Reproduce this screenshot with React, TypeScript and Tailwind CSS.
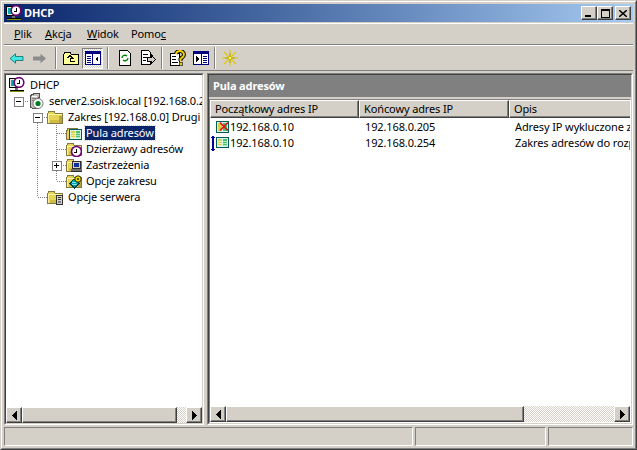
import React from "react";

const Icon = ({ children, className = "" }: { children: React.ReactNode; className?: string }) => (
  <svg width="16" height="16" viewBox="0 0 16 16" shapeRendering="crispEdges" className={"shrink-0 " + className}>
    {children}
  </svg>
);

const DhcpIcon = () => (
  <Icon>
    <rect x="0.5" y="1.5" width="9" height="9" fill="#e8e8e8" stroke="#000" />
    <rect x="2" y="3" width="6" height="6" fill="#00b0a8" />
    <rect x="1" y="13" width="14" height="1" fill="#000" />
    <rect x="1" y="14" width="14" height="1" fill="#809000" />
    <rect x="6" y="11" width="3" height="2" fill="#707070" />
    <circle cx="10" cy="5.5" r="4.8" fill="#fff" stroke="#700070" strokeWidth="1.6" shapeRendering="auto" />
    <path d="M10 2.5V6H7.5" stroke="#000" fill="none" />
  </Icon>
);

const ServerIcon = () => (
  <Icon>
    <path d="M2.5 2.5L6.5 .5H11.5V4L10 5V15.5H5L2.5 14Z" fill="#c4c0b8" stroke="#505050" />
    <rect x="4" y="3" width="5" height="1" fill="#fff" />
    <rect x="4" y="5" width="4" height="1" fill="#808080" />
    <rect x="4" y="7" width="3" height="1" fill="#808080" />
    <circle cx="10" cy="10.5" r="5" fill="#fff" stroke="#707070" shapeRendering="auto" />
    <circle cx="10" cy="10.5" r="2.6" fill="#007c20" shapeRendering="auto" />
  </Icon>
);

const Folder = () => (
  <>
    <path d="M.5 4.5L2 2.5H7L8.5 4.5H15.5V14.5H.5Z" fill="#e6d458" stroke="#807840" />
    <rect x="1" y="5" width="14" height="1" fill="#fff4a8" />
    <rect x="1" y="6" width="1" height="8" fill="#fff098" />
    <rect x="12" y="7" width="3" height="7" fill="#b8a438" />
    <rect x="3" y="11" width="9" height="3" fill="#cebc44" />
  </>
);

const FolderIcon = () => (
  <Icon>
    <Folder />
  </Icon>
);

const ServerOptIcon = () => (
  <Icon>
    <Folder />
    <rect x="9.5" y="6.5" width="6" height="9" fill="#d4d0c8" stroke="#303030" />
    <rect x="11" y="8" width="3" height="1" fill="#303030" />
    <rect x="11" y="10" width="3" height="1" fill="#303030" />
    <rect x="11" y="12" width="3" height="2" fill="#808080" />
  </Icon>
);

const PoolIcon = () => (
  <Icon>
    <path d="M0.5 6.5L2 3.5H11L14.5 5.5V14.5H0.5Z" fill="#e6d458" stroke="#807840" />
    <rect x="3.5" y="4.5" width="12" height="10" fill="#d8f4ec" stroke="#005c5c" />
    <rect x="5" y="6" width="4" height="7" fill="#dcd040" />
    <path d="M5 8H9M5 10H9M5 12H9" stroke="#f4f0a0" />
    <rect x="10" y="6" width="4" height="7" fill="#50c070" />
    <path d="M10 8H14M10 10H14M10 12H14" stroke="#a8e8b8" />
  </Icon>
);

const LeaseIcon = () => (
  <Icon>
    <Folder />
    <circle cx="10.5" cy="10.5" r="5" fill="#fff" stroke="#700070" strokeWidth="1.7" shapeRendering="auto" />
    <path d="M10.5 7.5V11H8" stroke="#000" fill="none" />
  </Icon>
);

const ReserveIcon = () => (
  <Icon>
    <Folder />
    <rect x="6.5" y="4.5" width="8" height="7" fill="#d4d0c8" stroke="#303030" />
    <rect x="8" y="6" width="5" height="4" fill="#1030a0" />
    <rect x="5" y="12" width="11" height="2" fill="#707070" />
    <rect x="5" y="14" width="11" height="1" fill="#303030" />
  </Icon>
);

const ScopeOptIcon = () => (
  <Icon>
    <Folder />
    <path d="M8 6L13 10.5L8.5 15L4 10.5Z" fill="#00a8b0" stroke="#004048" />
    <path d="M6 9H10M6 11H11" stroke="#80e0e8" />
    <circle cx="12" cy="6" r="3.2" fill="#f0d800" stroke="#303000" shapeRendering="auto" />
    <circle cx="12" cy="6" r="1" fill="#303000" shapeRendering="auto" />
  </Icon>
);

const ExcludedIcon = () => (
  <svg width="13" height="12" viewBox="0 0 13 12" shapeRendering="crispEdges" className="shrink-0">
    <rect x="0.5" y="0.5" width="12" height="11" fill="#d8f4ec" stroke="#005c5c" />
    <rect x="2" y="2" width="4" height="8" fill="#dcd040" />
    <rect x="7" y="2" width="4" height="8" fill="#50c070" />
    <path d="M4 1.5L12 9.5M12 1.5L4 9.5" stroke="#e01010" strokeWidth="1.7" shapeRendering="auto" />
  </svg>
);

const RangeIcon = () => (
  <svg width="18" height="16" viewBox="0 0 18 16" shapeRendering="crispEdges" className="shrink-0">
    <rect x="1" y="1" width="2" height="15" fill="#0000a0" />
    <rect x="0" y="2" width="4" height="1" fill="#0000a0" />
    <rect x="0" y="14" width="4" height="1" fill="#0000a0" />
    <rect x="5.5" y="2.5" width="12" height="10" fill="#d8f4ec" stroke="#005c5c" />
    <rect x="7" y="4" width="4" height="7" fill="#d0d860" />
    <path d="M7 6H11M7 8H11M7 10H11" stroke="#f0f0a8" />
    <rect x="12" y="4" width="4" height="7" fill="#50c070" />
    <path d="M12 6H16M12 8H16M12 10H16" stroke="#a8e8b8" />
  </svg>
);

const BackIcon = () => (
  <svg width="15" height="11" viewBox="0 0 15 11">
    <path d="M1 5.5L6.5 .8V3.5H14V7.5H6.5V10.2Z" fill="#40e8e0" stroke="#005858" strokeWidth=".7" />
  </svg>
);

const ForwardIcon = () => (
  <svg width="15" height="11" viewBox="0 0 15 11">
    <path d="M14 5.5L8.5 .8V3.5H1V7.5H8.5V10.2Z" fill="#8c8c8c" />
  </svg>
);

const ToolSep = () => <div className="w-[2px] h-[22px] border-l border-[#808080] bg-white shrink-0" />;

const Expander = ({ x, y, plus }: { x: number; y: number; plus: boolean }) => (
  <g>
    <rect x={x - 4.5} y={y - 4.5} width="9" height="9" fill="#fff" stroke="#808080" />
    <rect x={x - 2.5} y={y - 0.5} width="5" height="1" fill="#000" />
    {plus && <rect x={x - 0.5} y={y - 2.5} width="1" height="5" fill="#000" />}
  </g>
);

type Cell = "" | "v" | "T" | "L" | "minus" | "minusB" | "plusV";

const Gutter = ({ cells }: { cells: Cell[] }) => (
  <svg width={cells.length * 19} height="16" shapeRendering="crispEdges" className="shrink-0">
    {cells.map((c, i) => {
      const x = 9.5 + i * 19;
      const dash = "1 1";
      const right = i * 19 + 19;
      return (
        <g key={i}>
          {(c === "v" || c === "T" || c === "plusV") && (
            <line x1={x} x2={x} y1="0" y2="16" stroke="#808080" strokeDasharray={dash} />
          )}
          {c === "L" && <line x1={x} x2={x} y1="0" y2="8" stroke="#808080" strokeDasharray={dash} />}
          {c === "minusB" && <line x1={x} x2={x} y1="8" y2="16" stroke="#808080" strokeDasharray={dash} />}
          {(c === "T" || c === "L" || c === "minus" || c === "minusB" || c === "plusV") && (
            <line x1={x} x2={right} y1="8.5" y2="8.5" stroke="#808080" strokeDasharray={dash} />
          )}
          {(c === "minus" || c === "minusB") && <Expander x={x} y={8.5} plus={false} />}
          {c === "plusV" && <Expander x={x} y={8.5} plus />}
        </g>
      );
    })}
  </svg>
);

const TreeRow = ({
  cells,
  icon,
  label,
  selected,
  shift,
}: {
  cells: Cell[];
  icon: React.ReactNode;
  label: string;
  selected?: boolean;
  shift?: boolean;
}) => (
  <div className="flex items-center h-4 whitespace-nowrap">
    <Gutter cells={cells} />
    {icon}
    <span
      className={
        selected
          ? "ml-[3px] px-[1px] h-[14px] leading-[13px] bg-[#0a246a] text-white outline-1 outline-dotted outline-[#d4d0c8]"
          : shift
            ? "ml-[4px] leading-[14px]"
            : "ml-[5px] leading-[14px]"
      }
    >
      {label}
    </span>
  </div>
);

const Arrow = ({ dir }: { dir: "l" | "r" }) => (
  <svg width="5" height="9" viewBox="0 0 5 9" shapeRendering="crispEdges">
    {dir === "l" ? <path d="M4 0H5V9H4V8H3V7H2V6H1V5H0V4H1V3H2V2H3V1H4Z" fill="#000" /> : <path d="M0 0H1V1H2V2H3V3H4V4H5V5H4V6H3V7H2V8H1V9H0Z" fill="#000" />}
  </svg>
);

const raised =
  "bg-[#d4d0c8] border border-t-white border-l-white border-r-[#404040] border-b-[#404040] shadow-[inset_-1px_-1px_0_#808080]";
const dither = "bg-[repeating-conic-gradient(#d4d0c8_0_25%,#ffffff_0_50%)] bg-[length:2px_2px]";

const SbBtn = ({ dir }: { dir: "l" | "r" }) => (
  <div className={raised + " w-4 h-4 shrink-0 flex items-center justify-center"}>
    <Arrow dir={dir} />
  </div>
);

const Scrollbar = ({ thumb }: { thumb: string }) => (
  <div className="flex h-4 shrink-0">
    <SbBtn dir="l" />
    <div className={"flex-1 min-w-0 flex " + dither}>
      <div className={raised + " h-4 " + thumb} />
    </div>
    <SbBtn dir="r" />
  </div>
);

const sunken = "border border-t-[#808080] border-l-[#808080] border-r-white border-b-white";
const sunkenInner = "border border-t-[#404040] border-l-[#404040] border-r-[#d4d0c8] border-b-[#d4d0c8]";

const HeadCell = ({ w, label }: { w: string; label: string }) => (
  <div className={raised + " h-[18px] pl-[4px] flex items-center whitespace-nowrap shrink-0 " + w}>{label}</div>
);

export default function App() {
  return (
    <div
      className="w-[637px] h-[450px] overflow-hidden bg-[#d4d0c8] text-[11px] tracking-[-0.12px] text-black flex flex-col border border-t-[#d4d0c8] border-l-[#d4d0c8] border-r-[#404040] border-b-[#404040]"
      style={{ fontFamily: '"Noto Sans", "DejaVu Sans", sans-serif' }}
    >
      <div className="flex-1 min-h-0 flex flex-col border border-t-white border-l-white border-r-[#808080] border-b-[#808080] p-[2px]">
        {/* title bar */}
        <div className="h-[18px] shrink-0 flex items-center bg-gradient-to-r from-[#0a246a] to-[#a6caf0] pl-[2px] pr-[2px]">
          <DhcpIcon />
          <span className="ml-[2px] text-white font-bold">DHCP</span>
          <div className="ml-auto flex">
            {["min", "max"].map((k) => (
              <div key={k} className={raised + " w-4 h-[14px] flex items-center justify-center"}>
                {k === "min" ? (
                  <div className="w-[6px] h-[2px] bg-black mt-[6px] mr-[2px]" />
                ) : (
                  <div className="w-[9px] h-[9px] border border-black border-t-2" />
                )}
              </div>
            ))}
            <div className={raised + " ml-[2px] w-4 h-[14px] flex items-center justify-center"}>
              <svg width="8" height="7" viewBox="0 0 8 7">
                <path d="M0 0L8 7M8 0L0 7" stroke="#000" strokeWidth="1.5" />
              </svg>
            </div>
          </div>
        </div>

        {/* menu */}
        <div className="h-[22px] mt-[1px] shrink-0 flex items-center border-t border-white border-b border-b-[#808080] pl-[10px]">
          <span className="w-[31px]"><u>P</u>lik</span>
          <span className="w-[42px]"><u>A</u>kcja</span>
          <span className="w-[44px]"><u>W</u>idok</span>
          <span>Pomo<u>c</u></span>
        </div>

        {/* toolbar */}
        <div className="h-[26px] shrink-0 flex items-center border-t border-white border-b border-b-[#808080] pl-[5px]">
          <div className="w-[23px] flex justify-start"><BackIcon /></div>
          <div className="w-[23px] flex justify-start"><ForwardIcon /></div>
          <ToolSep />
          <div className="w-[6px]" />
          <Icon>
            <path d="M.5 4.5L2 2.5H7L8.5 4.5H15.5V14.5H.5Z" fill="#ffff99" stroke="#000" />
            <path d="M4.5 8L7 5.5L9.5 8H7.5V11H12" stroke="#000" fill="none" />
          </Icon>
          <div className={"w-[21px] h-[21px] ml-[3px] mr-[4px] flex items-center justify-center border border-t-[#808080] border-l-[#808080] border-r-white border-b-white " + dither}>
            <Icon>
              <rect x="0.5" y="1.5" width="15" height="13" fill="#fff" stroke="#000080" />
              <rect x="1" y="2" width="14" height="2" fill="#000080" />
              <rect x="7" y="4" width="1" height="10" fill="#000080" />
              <path d="M2 6H6M2 8H6M2 10H6M2 12H6" stroke="#000080" />
              <path d="M13 6V12L10 9Z" fill="#000" />
            </Icon>
          </div>
          <ToolSep />
          <div className="w-[8px]" />
          <Icon>
            <path d="M2.5 .5H10.5L13.5 3.5V15.5H2.5Z" fill="#fff" stroke="#000" />
            <path d="M5 8A3 3 0 0 1 10 6M11 8A3 3 0 0 1 6 10" stroke="#008000" strokeWidth="1.4" fill="none" shapeRendering="auto" />
          </Icon>
          <div className="w-[7px]" />
          <Icon>
            <path d="M1.5 .5H8.5L10.5 2.5V14.5H1.5Z" fill="#fff" stroke="#000" />
            <path d="M3 4H8M3 7H8M3 10H6" stroke="#000" />
            <path d="M7.5 7.5H11.5V5L15.5 9.5L11.5 13.5V11.5H7.5Z" fill="#d4d0c8" stroke="#000" />
          </Icon>
          <div className="w-[5px]" />
          <ToolSep />
          <div className="w-[7px]" />
          <Icon>
            <path d="M.5 3.5H9.5V15.5H.5Z" fill="#fff" stroke="#000" />
            <path d="M2 6H6M2 9H6M2 12H8" stroke="#000" />
            <path d="M6 4A4 3.5 0 1 1 12 7.5L10.5 9V11" stroke="#000" strokeWidth="4" fill="none" shapeRendering="auto" />
            <path d="M6 4A4 3.5 0 1 1 12 7.5L10.5 9V11" stroke="#f0d000" strokeWidth="2" fill="none" shapeRendering="auto" />
            <rect x="9" y="12" width="3" height="3" fill="#f0d000" stroke="#000" strokeWidth=".6" />
          </Icon>
          <div className="w-[7px]" />
          <Icon>
            <rect x="0.5" y="1.5" width="15" height="13" fill="#fff" stroke="#000080" />
            <rect x="1" y="2" width="14" height="2" fill="#000080" />
            <rect x="8" y="4" width="1" height="10" fill="#000080" />
            <path d="M3 6L6 9L3 12Z" fill="#000" />
            <path d="M10 6H14M10 8H14M10 10H14M10 12H14" stroke="#000080" />
          </Icon>
          <div className="w-[5px]" />
          <ToolSep />
          <div className="w-[6px]" />
          <Icon>
            <path d="M8 0V16M0 8H16M2 2L14 14M14 2L2 14" stroke="#e0c800" strokeWidth="1.1" shapeRendering="auto" />
            <path d="M8 3V13M3 8H13" stroke="#807000" strokeWidth=".5" shapeRendering="auto" />
            <rect x="7" y="7" width="2" height="2" fill="#ffff60" />
          </Icon>
        </div>

        {/* panes */}
        <div className="flex-1 min-h-0 flex mt-[2px] gap-[3px]">
          <div className={sunken + " w-[200px] shrink-0 flex flex-col"}>
            <div className={sunkenInner + " flex-1 min-h-0 flex flex-col bg-white"}>
              <div className="flex-1 min-h-0 overflow-hidden pt-[2px] pl-[3px]">
                <TreeRow cells={[]} icon={<DhcpIcon />} label="DHCP" />
                <TreeRow cells={["minus"]} icon={<ServerIcon />} label="server2.soisk.local [192.168.0.2]" />
                <TreeRow cells={["", "minusB"]} icon={<FolderIcon />} label="Zakres [192.168.0.0] Drugi" />
                <TreeRow cells={["", "v", "T"]} icon={<PoolIcon />} label="Pula adresów" selected />
                <TreeRow cells={["", "v", "T"]} icon={<LeaseIcon />} label="Dzierżawy adresów" shift />
                <TreeRow cells={["", "v", "plusV"]} icon={<ReserveIcon />} label="Zastrzeżenia" shift />
                <TreeRow cells={["", "v", "L"]} icon={<ScopeOptIcon />} label="Opcje zakresu" shift />
                <TreeRow cells={["", "L"]} icon={<ServerOptIcon />} label="Opcje serwera" />
              </div>
              <Scrollbar thumb="w-[155px]" />
            </div>
          </div>

          <div className={sunken + " flex-1 min-w-0 flex flex-col"}>
            <div className={sunkenInner + " flex-1 min-h-0 flex flex-col bg-[#d4d0c8]"}>
              <div className="h-[22px] shrink-0 bg-[#808080] text-white font-bold flex items-center pl-[4px]">Pula adresów</div>
              <div className={sunken + " flex-1 min-h-0 mt-[2px] flex flex-col bg-white"}>
                <div className="flex-1 min-h-0 overflow-hidden">
                  <div className="flex">
                    <HeadCell w="w-[149px]" label="Początkowy adres IP" />
                    <HeadCell w="w-[150px]" label="Końcowy adres IP" />
                    <HeadCell w="w-[125px]" label="Opis" />
                  </div>
                  <div className="flex items-center h-4 mt-[1px] whitespace-nowrap">
                    <div className="w-[149px] shrink-0 flex items-center pl-[6px]">
                      <ExcludedIcon />
                      <span className="ml-[1px]">192.168.0.10</span>
                    </div>
                    <div className="w-[150px] shrink-0 pl-[6px]">192.168.0.205</div>
                    <div className="flex-1 min-w-0 overflow-hidden pl-[6px]">Adresy IP wykluczone z zakresu</div>
                  </div>
                  <div className="flex items-center h-4 whitespace-nowrap">
                    <div className="w-[149px] shrink-0 flex items-center pl-[1px]">
                      <RangeIcon />
                      <span className="ml-[1px]">192.168.0.10</span>
                    </div>
                    <div className="w-[150px] shrink-0 pl-[6px]">192.168.0.254</div>
                    <div className="flex-1 min-w-0 overflow-hidden pl-[6px]">Zakres adresów do rozproszenia</div>
                  </div>
                </div>
                <Scrollbar thumb="w-[298px]" />
              </div>
            </div>
          </div>
        </div>

        {/* status bar */}
        <div className="h-[19px] shrink-0 mt-[2px] flex gap-[2px]">
          <div className={sunken + " w-[409px] shrink-0"} />
          <div className={sunken + " w-[131px] shrink-0"} />
          <div className={sunken + " flex-1"} />
        </div>
      </div>
    </div>
  );
}
